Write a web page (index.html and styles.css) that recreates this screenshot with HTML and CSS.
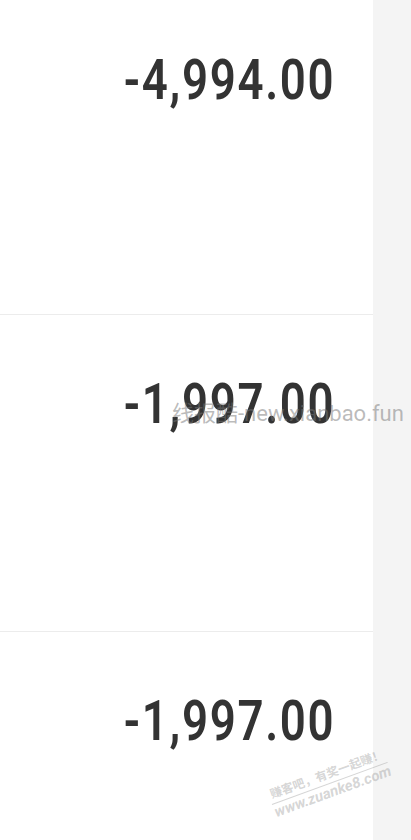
FILE: index.html
```html
<!DOCTYPE html>
<html lang="zh-CN">
<head>
  <meta charset="UTF-8" />
  <meta name="viewport" content="width=device-width, initial-scale=1.0" />
  <title>账单</title>
  <link rel="stylesheet" href="styles.css">
</head>
<body>
  <div class="page">
    <div class="list">
      <div class="row first"><span class="amount">-4,994.00</span></div>
      <div class="row"><span class="amount">-1,997.00</span></div>
      <div class="row last"><span class="amount">-1,997.00</span></div>
    </div>
    <div class="side"></div>
  </div>
  <div class="mark">线报酷-new.xianbao.fun</div>
  <div class="stamp">
    <div class="stamp-top">赚客吧，有奖一起赚！</div>
    <div class="stamp-url">www.zuanke8.com</div>
  </div>
</body>
</html>
```

FILE: styles.css
```css
body {
  margin: 0;
  font-family: Roboto, "Noto Sans CJK SC", sans-serif;
  background: #f4f4f4;
  overflow: hidden;
  height: 840px;
}
.page {
  display: flex;
  height: 840px;
  overflow: hidden;
}
.list {
  width: 373px;
  background: #fff;
}
.side {
  flex: 1;
  background: #f4f4f4;
}
.row {
  height: 316px;
  border-bottom: 1px solid #ececec;
  display: flex;
  justify-content: flex-end;
  align-items: flex-start;
  padding-right: 38px;
}
.row.first {
  height: 314px;
}
.row.last {
  border-bottom: none;
}
.amount {
  display: inline-block;
  font-family: Roboto, sans-serif;
  font-weight: 600;
  font-size: 55px;
  line-height: 55px;
  letter-spacing: 2px;
  color: #333;
  margin-top: 62px;
  transform: scaleX(0.83);
  transform-origin: right center;
}
.row.first .amount {
  margin-top: 53px;
}
.mark {
  position: absolute;
  left: 172px;
  top: 395px;
  font-size: 22px;
  color: rgba(120, 120, 120, 0.5);
  white-space: nowrap;
}
.stamp {
  position: absolute;
  left: 266px;
  top: 788px;
  transform: rotate(-20deg);
  transform-origin: left top;
  color: rgba(150, 150, 150, 0.4);
  font-weight: bold;
  white-space: nowrap;
  line-height: 17px;
}
.stamp-top {
  font-size: 12px;
  padding-left: 2px;
}
.stamp-url {
  font-size: 15px;
  font-style: italic;
  border-top: 1px solid rgba(150, 150, 150, 0.4);
}
```
